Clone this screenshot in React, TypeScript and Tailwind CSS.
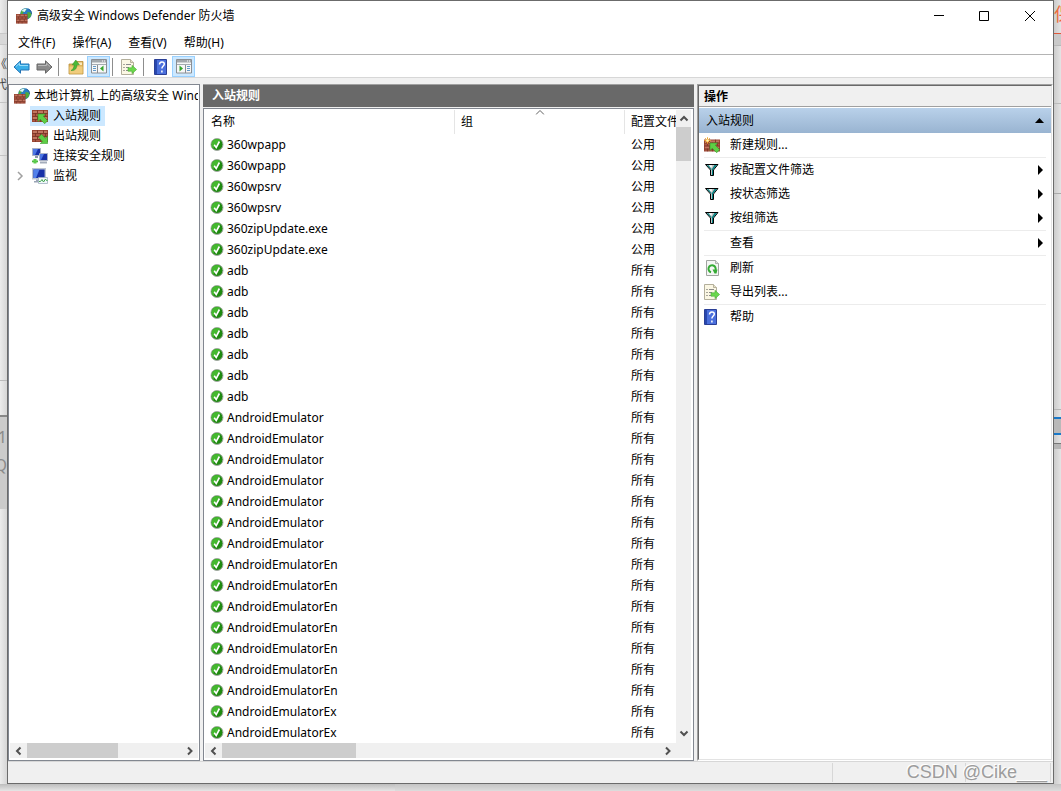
import { ReactNode, useState } from "react";

type Rule = { name: string; profile: string };

const repeat = (name: string, profile: string, count: number): Rule[] =>
  Array.from({ length: count }, () => ({ name, profile }));

const rules: Rule[] = [
  ...repeat("360wpapp", "公用", 2),
  ...repeat("360wpsrv", "公用", 2),
  ...repeat("360zipUpdate.exe", "公用", 2),
  ...repeat("adb", "所有", 7),
  ...repeat("AndroidEmulator", "所有", 7),
  ...repeat("AndroidEmulatorEn", "所有", 7),
  ...repeat("AndroidEmulatorEx", "所有", 2),
];

const menus = ["文件(F)", "操作(A)", "查看(V)", "帮助(H)"];

function Bricks() {
  return (
    <>
      <path d="M0 0h16v12H0z" fill="#9a4735" />
      <path d="M1 1h4v2H1zM6 1h5v2H6zM12 1h3v2h-3zM1 7h4v2H1zM6 7h5v2H6zM12 7h3v2h-3z" fill="#c07660" />
      <path d="M1 4h2v2H1zM4 4h4v2H4zM9 4h4v2H9zM14 4h1v2h-1zM1 10h2v1H1zM4 10h4v1H4zM9 10h4v1H9z" fill="#ad5a45" />
      <path d="M0 3.5h16M0 6.5h16M0 9.5h16M5.5 0v3M11.5 0v3M3.5 3v3M8.5 3v3M13.5 3v3M5.5 6v3M11.5 6v3M3.5 9v3M8.5 9v3" stroke="#6e2f22" strokeWidth="0.5" />
    </>
  );
}

function FirewallIcon() {
  return (
    <svg className="size-4 shrink-0" viewBox="0 0 16 16" aria-hidden="true">
      <circle cx="10" cy="5.800" r="5.700" fill="#2a7cc4" />
      <path d="M5 3.400C6.300 1.300 8.500.500 10.500.600L9.700 3 7.500 4.200 6.500 6H4.400zM11.500 4l3 .5 1 2-1.500 3-1.700 1.200-1.300-3z" fill="#4cab3d" />
      <path d="M5.500 3C7 1 9 .500 10.800.700L8.600 4z" fill="#dff4fc" />
      <path d="M12.500 1c2 1 3.200 2.800 3.200 5" fill="none" stroke="#164e88" strokeWidth="0.800" />
      <g transform="translate(0 6) scale(0.72 0.8)">
        <Bricks />
      </g>
    </svg>
  );
}

function InboundIcon() {
  return (
    <svg className="size-4 shrink-0" viewBox="0 0 16 16" aria-hidden="true">
      <g transform="translate(0 2)">
        <Bricks />
      </g>
      <path d="M6 6h7.500l-2.200 2.200 4.400 4.500-3 3-4.500-4.400L6 13.500z" fill="#5dce45" stroke="#36992a" strokeWidth="0.600" />
    </svg>
  );
}

function OutboundIcon() {
  return (
    <svg className="size-4 shrink-0" viewBox="0 0 16 16" aria-hidden="true">
      <g transform="translate(0 2)">
        <Bricks />
      </g>
      <path d="M15.600 15.600v-7.500l-2.200 2.200L9.500 6.300l-3 3 4 4.100-2.300 2.200z" fill="#5dce45" stroke="#36992a" strokeWidth="0.600" />
    </svg>
  );
}

function NewRuleIcon() {
  return (
    <svg className="size-4 shrink-0" viewBox="0 0 16 16" aria-hidden="true">
      <g transform="translate(0 2.500)">
        <Bricks />
      </g>
      <path d="M6 6h7.500l-2.200 2.200 4.400 4.500-3 3-4.500-4.400L6 13.500z" fill="#5dce45" stroke="#36992a" strokeWidth="0.600" />
      <path d="M3.500.300v6.400M.300 3.500h6.400M1.200 1.200l4.600 4.600M5.800 1.200L1.200 5.800" stroke="#f0a52c" strokeWidth="1" />
      <circle cx="3.500" cy="3.500" r="1.300" fill="#fff3b0" />
    </svg>
  );
}

function ConnectionIcon() {
  return (
    <svg className="size-4 shrink-0" viewBox="0 0 16 16" aria-hidden="true">
      <path d="M.500.500h8v7h-8z" fill="#1731a8" stroke="#a9b1c4" />
      <path d="M1 1h5L3 7H1z" fill="#4b76e4" />
      <path d="M3 8h3v2H3z" fill="#8e98aa" />
      <path d="M7.500 5.500h8v7h-8z" fill="#1731a8" stroke="#a9b1c4" />
      <path d="M8 6h4l-3 6H8z" fill="#4b76e4" />
      <path d="M8 14.500h7" stroke="#a4adbb" strokeWidth="2" />
      <path d="M0 12.500h6v1.800H0z" fill="#46b83a" />
      <path d="M1.500 11h3v4.500h-3z" fill="#5ccb4c" />
    </svg>
  );
}

function MonitorIcon() {
  return (
    <svg className="size-4 shrink-0" viewBox="0 0 16 16" aria-hidden="true">
      <path d="M.700.700h12.600v10.100H.700z" fill="#1731a8" stroke="#bcc4d2" strokeWidth="1.400" />
      <path d="M1.500 1.500h6L4 10H1.500z" fill="#5180ea" />
      <path d="M4 11.500h4v1.500h2v1.500H2V13h2z" fill="#9aa4b5" />
      <path d="M6.500 9.500h9v6h-9z" fill="#f1f7fb" stroke="#9fb0c0" strokeWidth="0.800" />
      <path d="M7 13.500h1.500l1.500-2 1.500 2.500 2-3 1 1.500h1" fill="none" stroke="#3fa74a" />
    </svg>
  );
}

function ArrowIcon({ forward }: { forward?: boolean }) {
  return (
    <svg className="h-4 w-[17px] shrink-0" viewBox="0 0 17 16" aria-hidden="true">
      <path
        d={forward ? "M16 8L9.500 1.800V5H1v6h8.500v3.200z" : "M1 8l6.500-6.200V5H16v6H7.500v3.200z"}
        fill={forward ? "#8b8b8b" : "#38aee8"}
        stroke={forward ? "#666" : "#2273b5"}
      />
      <path
        d={forward ? "M2 6.500h8.500V4.300L14 7.500" : "M3 7.500l3.500-3.200v2.200H15"}
        fill="none"
        stroke={forward ? "#b9b9b9" : "#96dcfa"}
      />
    </svg>
  );
}

function FolderUpIcon() {
  return (
    <svg className="size-4 shrink-0" viewBox="0 0 16 16" aria-hidden="true">
      <path d="M1 5h6l1.500-2.500H15V15H1z" fill="#e0b45a" stroke="#b98f3b" strokeWidth="0.800" />
      <path d="M9.500 3.500H14V6H9z" fill="#f8e8bd" />
      <path d="M1.500 7.500h13v7h-13z" fill="#f0cc7d" />
      <path d="M3 11.500c2-1 3-3 3.200-5.700H4.200L7.800 1l3.600 4.800H9C8.800 9.500 7 12 3 11.500z" fill="#49b938" stroke="#2f8d24" strokeWidth="0.500" />
    </svg>
  );
}

function PaneIcon({ right }: { right?: boolean }) {
  return (
    <svg className="h-[15px] w-4 shrink-0" viewBox="0 0 16 15" aria-hidden="true">
      <path d="M.500.500h15v13.500H.500z" fill="#f7f7f7" stroke="#8b8f94" />
      <path d="M1 1h14v2.500H1z" fill="#a3a8ad" />
      <path d="M11 2h1M13 2h1" stroke="#fff" />
      <path d="M1 5.500h14" stroke="#a5abb2" />
      <path d={right ? "M9.500 6v8" : "M6.500 6v8"} stroke="#8b8f94" />
      <path d={right ? "M11 7.500h3M11 9.500h3M11 11.500h3" : "M2 7.500h3M2 9.500h3M2 11.500h3"} stroke="#6299c9" />
      <path d={right ? "M3.500 6.500v6L7 9.500z" : "M12.500 6.500v6L9 9.500z"} fill="#35a52c" />
    </svg>
  );
}

function ExportIcon() {
  return (
    <svg className="size-4 shrink-0" viewBox="0 0 16 16" aria-hidden="true">
      <path d="M.500.500h9l3 3v12H.500z" fill="#fbf7e4" stroke="#b3af9b" />
      <path d="M9.500.500v3h3" fill="#e7e2c8" stroke="#a9a58f" strokeWidth="0.800" />
      <path d="M2.500 5.500h1M2.500 8.500h1M2.500 11.500h1" stroke="#555" />
      <path d="M5 5.500h5M5 8.500h3M5 11.500h3" stroke="#8b8b8b" />
      <path d="M7 8.800h4V6.300l4.600 4.200-4.600 4.200v-2.500H7z" fill="#6bd84c" stroke="#4aab35" strokeWidth="0.600" />
    </svg>
  );
}

function HelpIcon() {
  return (
    <svg className="h-4 w-[14px] shrink-0" viewBox="0 0 14 16" aria-hidden="true">
      <path d="M.500.500h12v15H.500z" fill="#4a6fdc" stroke="#2a3f96" />
      <path d="M1 1h2v14H1z" fill="#2847ae" />
      <path d="M5.500 5.500c0-3.400 4.800-3.400 4.800-.5 0 2-2.400 2-2.400 4.500M7.900 11.500v2" fill="none" stroke="#fff" strokeWidth="1.500" />
    </svg>
  );
}

function FilterIcon() {
  return (
    <svg className="size-4 shrink-0" viewBox="0 0 16 16" aria-hidden="true">
      <path d="M1.500 2.500h12.500L9.500 8v5.500h-3V8z" fill="#c4c4c4" stroke="#000" strokeWidth="1" />
      <path d="M13 3h-2.500L8 7v6h1V7.700z" fill="#008080" />
      <path d="M2.800 3.200h1.700L7.500 7v1z" fill="#008080" />
      <path d="M5 3.300h3L7.300 6z" fill="#fff" />
    </svg>
  );
}

function RefreshIcon() {
  return (
    <svg className="size-4 shrink-0" viewBox="0 0 16 16" aria-hidden="true">
      <path d="M2.500.500h9l3 3v12h-12z" fill="#f4f6f4" stroke="#a1a5a1" />
      <path d="M11.500.500v3h3" fill="#dde0dd" stroke="#a1a5a1" strokeWidth="0.800" />
      <path d="M7 12.300A3.600 3.600 0 1 1 11.500 10" fill="none" stroke="#36ab36" strokeWidth="2" />
      <path d="M8.500 9.500h5l-1 4h-2z" fill="#36ab36" />
    </svg>
  );
}

function EnabledIcon() {
  return (
    <svg className="size-[14px] shrink-0" viewBox="0 0 14 14" aria-hidden="true">
      <circle cx="7" cy="6.500" r="6" fill="#1f8a10" stroke="#a3aaa3" />
      <path d="M1.500 6.500a5.500 5.500 0 0 1 9-4.200L3 10.500A5.500 5.500 0 0 1 1.500 6.500z" fill="#44b82f" />
      <path d="M4.200 6.800l2 2.700 3.200-6" fill="none" stroke="#fff" strokeWidth="1.600" />
    </svg>
  );
}

const chevrons = {
  left: "M6.500 1.500L3 5l3.500 3.500",
  right: "M3 1.500L6.500 5 3 8.500",
  up: "M1.500 6.500L5 3l3.500 3.500",
  down: "M1.500 3.500L5 7l3.500-3.500",
};

function Chevron({ dir }: { dir: keyof typeof chevrons }) {
  return (
    <svg className="size-[10px]" viewBox="0 0 10 10" aria-hidden="true">
      <path d={chevrons[dir]} fill="none" stroke="#505050" strokeWidth="2" />
    </svg>
  );
}

function HScroll({ thumb }: { thumb: string }) {
  return (
    <div className="flex h-[15px] bg-[#f0f0f0]">
      <button aria-label="向左滚动" className="flex w-[17px] items-center justify-center">
        <Chevron dir="left" />
      </button>
      <div className="flex-1">
        <div className={`h-full bg-[#cdcdcd] ${thumb}`} />
      </div>
      <button aria-label="向右滚动" className="flex w-[17px] items-center justify-center">
        <Chevron dir="right" />
      </button>
    </div>
  );
}

function ToolButton({ label, active, children }: { label: string; active?: boolean; children: ReactNode }) {
  return (
    <button
      aria-label={label}
      className={`flex h-[21px] w-[23px] items-center justify-center border ${
        active ? "border-[#99d1ff] bg-[#cce8ff]" : "border-transparent"
      }`}
    >
      {children}
    </button>
  );
}

function ToolDivider() {
  return <div className="mx-0.5 h-[18px] w-px bg-[#8d8d8d]" />;
}

function ActionItem({ icon, label, submenu }: { icon?: ReactNode; label: string; submenu?: boolean }) {
  return (
    <button className="flex h-6 w-full items-center pl-[5px] pr-2 text-left">
      <span className="flex w-[26px] shrink-0">{icon}</span>
      <span className="flex-1">{label}</span>
      {submenu && (
        <svg className="h-[10px] w-[5px]" viewBox="0 0 5 10" aria-hidden="true">
          <path d="M0 0v10l5-5z" />
        </svg>
      )}
    </button>
  );
}

function Separator() {
  return <div className="mx-[5px] h-px bg-[#ececec]" />;
}

// slices of the windows lying behind this one
function LeftBackdrop() {
  return (
    <div className="flex w-[7px] shrink-0 flex-col overflow-hidden bg-gradient-to-r from-[#ececec] to-[#d6d6d6] text-[#8a8a8a]">
      <div className="h-[34px] border-b border-[#c8c8c8]" />
      <div className="h-[11px] border-b border-[#c8c8c8] bg-[#d8d8d8]" />
      <div className="flex h-[58px] flex-col items-end border-b border-[#c4c4c4] pt-3 text-xs leading-4 text-[#444]">
        <span>《</span>
        <span className="pt-1">代</span>
      </div>
      <div className="h-[53px] border-b border-[#c4c4c4]" />
      <div className="h-[225px] border-b border-[#bbb]" />
      <div className="h-9 border-b-2 border-[#888]" />
      <div className="flex h-[92px] flex-col items-end bg-[#cbcbcb] pt-1.5 text-base leading-7">
        <span>51</span>
        <span>Q</span>
      </div>
    </div>
  );
}

function RightBackdrop() {
  return (
    <div className="w-[7px] shrink-0 overflow-hidden bg-gradient-to-r from-[#cccccc] to-[#e4e4e4]">
      <div className="h-[34px] border-b border-[#e0583a] pt-1 text-lg leading-5 text-[#ee6a3c]">保</div>
      <div className="h-3 border-b border-[#b8b8b8] bg-[#c9c9c9]" />
      <div className="h-[58px] border-b border-[#bbb]" />
      <div className="h-[90px] border-b border-[#aaa]" />
      <div className="h-[216px] border-b border-[#b5b5b5]" />
      <div className="h-[9px] border-b-2 border-[#1a78c8]" />
      <div className="h-4 border-b-2 border-[#1a78c8] bg-[#b9b9b9]" />
      <div className="h-[9px] border-b border-[#777]" />
      <div className="h-[5px] bg-[#b5b5b5]" />
    </div>
  );
}

export default function App() {
  const [selected, setSelected] = useState("入站规则");

  const tree = [
    { label: "入站规则", icon: <InboundIcon /> },
    { label: "出站规则", icon: <OutboundIcon /> },
    { label: "连接安全规则", icon: <ConnectionIcon /> },
    { label: "监视", icon: <MonitorIcon />, expandable: true },
  ];

  return (
    <div className="flex min-h-screen flex-col bg-[#dcdcdc] font-['Noto_Sans','Noto_Sans_CJK_SC',sans-serif] text-xs leading-4 text-black">
      <div className="flex">
        <LeftBackdrop />

        <div className="flex min-w-0 flex-1 flex-col border border-[#6b6b6b] bg-[#f0f0f0]">
          <header className="bg-white">
            <div className="flex h-[30px] items-center pl-2">
              <FirewallIcon />
              <h1 className="flex-1 pl-[5px]">高级安全 Windows Defender 防火墙</h1>
              <button aria-label="最小化" className="flex h-full w-[45px] items-center justify-center">
                <svg className="size-[11px]" viewBox="0 0 11 11" aria-hidden="true">
                  <path d="M0 4.500h10" stroke="#000" />
                </svg>
              </button>
              <button aria-label="最大化" className="flex h-full w-[45px] items-center justify-center">
                <svg className="size-[11px]" viewBox="0 0 11 11" aria-hidden="true">
                  <path d="M.500.500h9v9h-9z" fill="none" stroke="#000" />
                </svg>
              </button>
              <button aria-label="关闭" className="flex h-full w-[46px] items-center justify-center">
                <svg className="size-[11px]" viewBox="0 0 11 11" aria-hidden="true">
                  <path d="M0 0l10 10M10 0L0 10" stroke="#000" />
                </svg>
              </button>
            </div>

            <nav className="flex h-6 items-center gap-[17px] border-b border-[#b4b4b4] pl-[10px]">
              {menus.map((menu) => (
                <button key={menu}>{menu}</button>
              ))}
            </nav>

            <div className="flex h-[23px] items-center border-b border-[#d7d7d7] pl-0.5 pt-px">
              <ToolButton label="后退">
                <ArrowIcon />
              </ToolButton>
              <ToolButton label="前进">
                <ArrowIcon forward />
              </ToolButton>
              <ToolDivider />
              <div className="flex pl-[3px]">
                <ToolButton label="向上">
                  <FolderUpIcon />
                </ToolButton>
                <ToolButton label="显示控制台树" active>
                  <PaneIcon />
                </ToolButton>
              </div>
              <ToolDivider />
              <div className="flex pl-0.5 pr-px">
                <ToolButton label="导出列表">
                  <ExportIcon />
                </ToolButton>
              </div>
              <ToolDivider />
              <div className="flex pl-[3px]">
                <ToolButton label="帮助">
                  <HelpIcon />
                </ToolButton>
                <ToolButton label="显示操作窗格" active>
                  <PaneIcon right />
                </ToolButton>
              </div>
            </div>
          </header>

          <main className="flex pt-1.5">
            <aside className="mr-[3px] flex w-[192px] shrink-0 flex-col border border-[#828790] bg-white px-px pb-0.5 pt-px">
              <div className="flex h-5 items-center gap-1 pl-1">
                <FirewallIcon />
                <span className="min-w-0 flex-1 overflow-hidden whitespace-nowrap">本地计算机 上的高级安全 Wind</span>
              </div>
              <ul className="flex-1">
                {tree.map((item) => (
                  <li key={item.label} className="flex h-5 items-center">
                    <span className="flex w-5 justify-center">
                      {item.expandable && (
                        <svg className="size-[10px]" viewBox="0 0 10 10" aria-hidden="true">
                          <path d="M3 1l4 4-4 4" fill="none" stroke="#a0a0a0" strokeWidth="1.500" />
                        </svg>
                      )}
                    </span>
                    <button
                      onClick={() => setSelected(item.label)}
                      className={`flex h-5 items-center gap-[5px] pl-0.5 pr-1 ${
                        selected === item.label ? "bg-[#cce8ff]" : ""
                      }`}
                    >
                      {item.icon}
                      {item.label}
                    </button>
                  </li>
                ))}
              </ul>
              <HScroll thumb="w-[91px]" />
            </aside>

            <section className="mr-[3px] flex w-[491px] shrink-0 flex-col">
              <h2 className="mb-px flex h-[23px] items-center border-t border-[#a0a0a0] bg-[#696969] pl-[9px] font-bold text-white">
                入站规则
              </h2>
              <div className="flex border border-[#828790] bg-white pb-0.5 pl-px pr-0.5 pt-px">
                <div className="min-w-0 flex-1 overflow-hidden">
                  <table className="w-full table-fixed border-separate border-spacing-0 text-left">
                    <colgroup>
                      <col className="w-[250px]" />
                      <col className="w-[170px]" />
                      <col />
                    </colgroup>
                    <thead>
                      <tr className="h-6">
                        <th className="border-r border-[#e5e5e5] p-0 pl-1.5 font-normal">名称</th>
                        <th className="relative border-r border-[#e5e5e5] p-0 pl-1.5 font-normal">
                          组
                          <svg className="absolute left-1/2 top-0 h-[5px] w-[9px] -translate-x-1/2" viewBox="0 0 9 5" aria-hidden="true">
                            <path d="M.500 4.500l4-4 4 4" fill="none" stroke="#606060" />
                          </svg>
                        </th>
                        <th className="overflow-hidden whitespace-nowrap p-0 pl-1.5 font-normal">配置文件</th>
                      </tr>
                    </thead>
                    <tbody>
                      {rules.map((rule, i) => (
                        <tr key={i} className="h-[21px]">
                          <td className="p-0 pl-[5px]">
                            <div className="flex items-center gap-[3px]">
                              <EnabledIcon />
                              {rule.name}
                            </div>
                          </td>
                          <td className="p-0" />
                          <td className="p-0 pl-1.5">{rule.profile}</td>
                        </tr>
                      ))}
                    </tbody>
                  </table>
                  <HScroll thumb="w-[134px]" />
                </div>
                <div className="flex w-[15px] flex-col bg-[#f0f0f0] pb-[15px]">
                  <button aria-label="向上滚动" className="flex h-[17px] items-center justify-center">
                    <Chevron dir="up" />
                  </button>
                  <div className="flex-1">
                    <div className="h-[34px] bg-[#cdcdcd]" />
                  </div>
                  <button aria-label="向下滚动" className="flex h-5 items-center justify-center">
                    <Chevron dir="down" />
                  </button>
                </div>
              </div>
            </section>

            <aside className="flex min-w-0 flex-1 border border-b-white border-l-[#a0a0a0] border-r-white border-t-[#a0a0a0]">
              <div className="min-w-0 flex-1 border border-b-[#e3e3e3] border-l-[#696969] border-r-[#e3e3e3] border-t-[#696969] bg-white">
                <h2 className="mb-px flex h-[21px] items-center border-b border-[#a0a0a0] bg-[#f0f0f0] pl-[5px] pt-px font-bold">
                  操作
                </h2>
                <button className="flex h-[25px] w-full items-center justify-between bg-gradient-to-b from-[#b9d1ea] to-[#99b4d1] px-[7px]">
                  入站规则
                  <svg className="h-[5px] w-[9px]" viewBox="0 0 9 5" aria-hidden="true">
                    <path d="M0 5h9L4.500 0z" fill="#000" />
                  </svg>
                </button>
                <ActionItem icon={<NewRuleIcon />} label="新建规则..." />
                <Separator />
                <ActionItem icon={<FilterIcon />} label="按配置文件筛选" submenu />
                <ActionItem icon={<FilterIcon />} label="按状态筛选" submenu />
                <ActionItem icon={<FilterIcon />} label="按组筛选" submenu />
                <Separator />
                <ActionItem label="查看" submenu />
                <Separator />
                <ActionItem icon={<RefreshIcon />} label="刷新" />
                <ActionItem icon={<ExportIcon />} label="导出列表..." />
                <Separator />
                <ActionItem icon={<HelpIcon />} label="帮助" />
              </div>
            </aside>
          </main>

          <footer className="relative flex h-[22px] justify-end border-t border-[#d7d7d7] py-px pr-0.5">
            <div className="w-[133px] border-l border-[#d7d7d7]" />
            <div className="w-[86px] border-x border-[#d7d7d7]" />
            <span className="absolute right-1.5 top-0 whitespace-nowrap font-['Liberation_Sans',sans-serif] text-lg leading-5 text-[#9c9c9c] [text-shadow:-1px_-1px_0_#fff]">
              CSDN @Cike___
            </span>
          </footer>
        </div>

        <RightBackdrop />
      </div>
      <div className="flex min-h-[7px] flex-1 bg-gradient-to-b from-[#bdbdbd] to-[#e6e6e6]">
        <div className="w-[395px]" />
        <div className="flex-1 bg-[#d0d0d0]/40" />
      </div>
    </div>
  );
}
